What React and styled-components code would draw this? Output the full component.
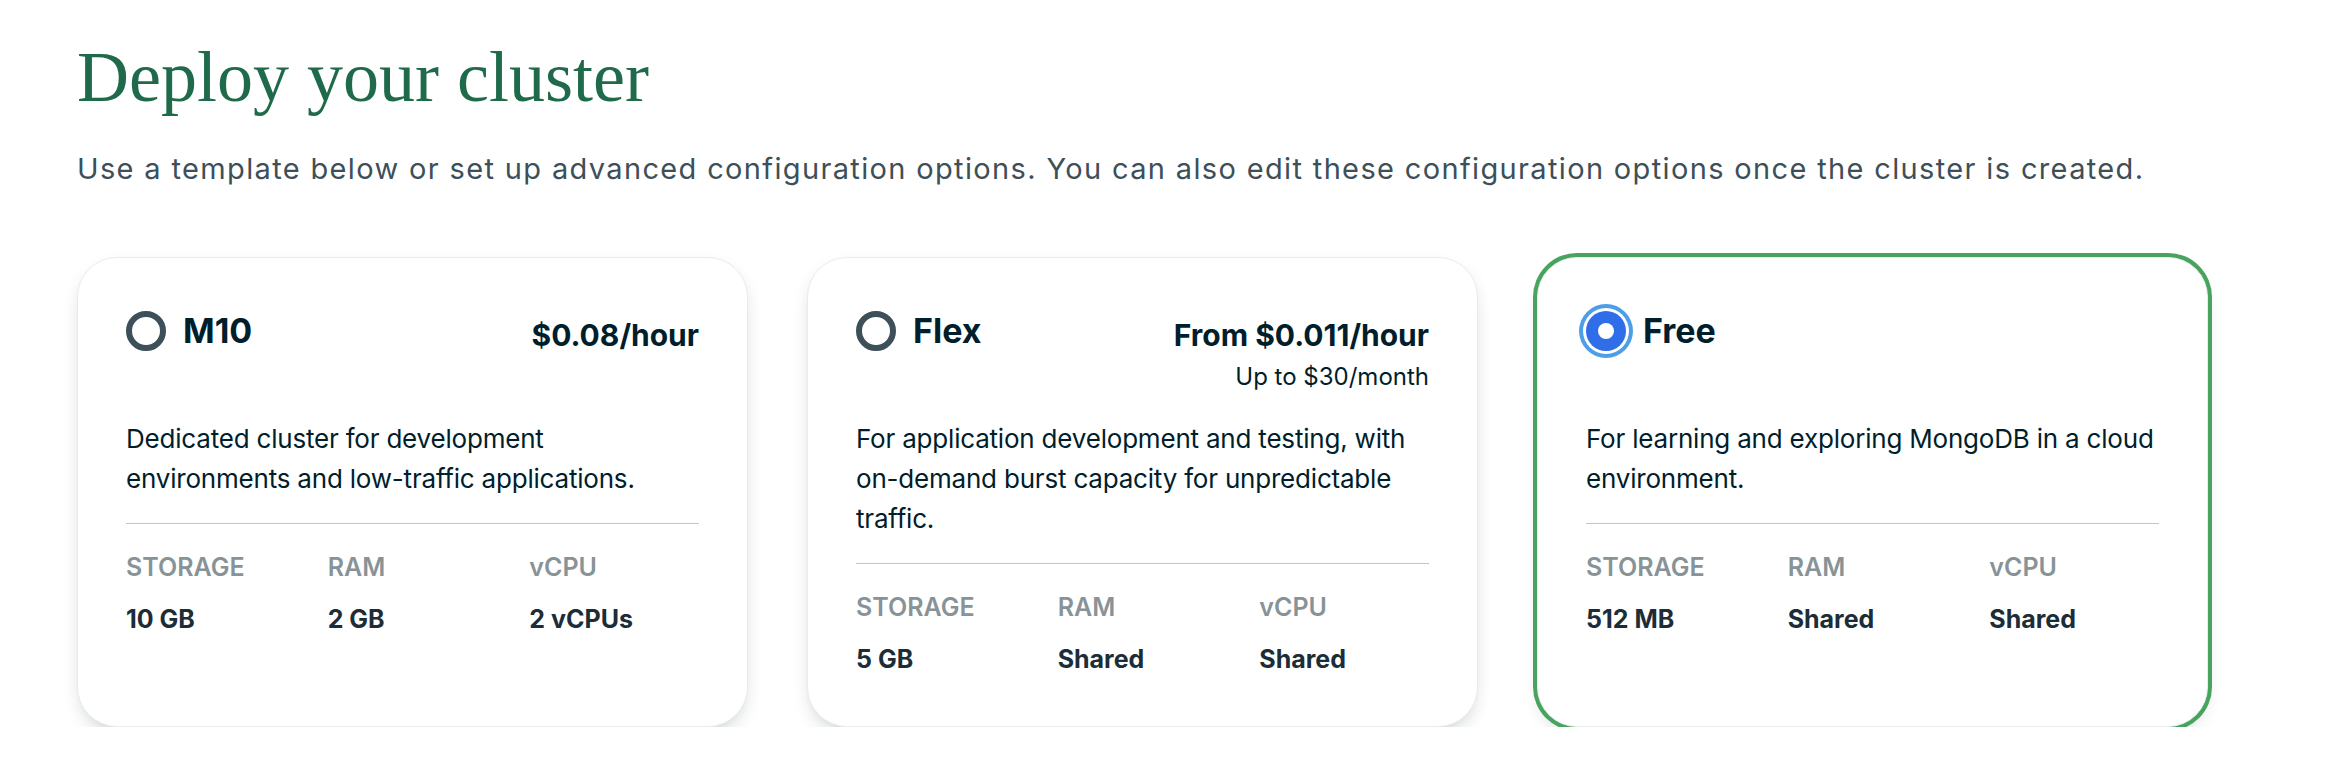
import styled, { createGlobalStyle } from "styled-components";

const GlobalStyle = createGlobalStyle`
    body {
        margin: 0;
        background: #ffffff;
        font-family: Inter, "Noto Sans", sans-serif;
        color: #001e2b;
    }
`

const Page = styled.main`
    padding: 37px 0 0 77px;
`

const Title = styled.h1`
    margin: 0;
    font-family: "Liberation Serif", serif;
    font-weight: 400;
    font-size: 72px;
    line-height: 80px;
    color: #1f6a4a;
`

const Subtitle = styled.p`
    margin: 32px 0 0;
    font-size: 29px;
    line-height: 40px;
    letter-spacing: 1.35px;
    color: #3d4f58;
`

const Cards = styled.div`
    display: flex;
    gap: 59px;
    margin-top: 68px;
    align-items: stretch;
`

const Card = styled.div`
    box-sizing: border-box;
    width: 671px;
    padding: 48px 48px 47px;
    border: 1px solid #e8edeb;
    border-radius: 40px;
    background: #ffffff;
    box-shadow: ${props => props.selected
        ? "0 0 0 4px #48a35f, 0 8px 20px -8px rgba(0, 30, 43, 0.3)"
        : "0 8px 20px -8px rgba(0, 30, 43, 0.3)"};
`

const Header = styled.div`
    display: flex;
    justify-content: space-between;
    align-items: flex-start;
    min-height: 96px;
`

const NameGroup = styled.div`
    display: flex;
    align-items: center;
    gap: 17px;
    height: 50px;
`

const Radio = styled.span`
    box-sizing: border-box;
    display: flex;
    align-items: center;
    justify-content: center;
    width: 40px;
    height: 40px;
    border-radius: 50%;
    border: ${props => props.checked ? "none" : "6px solid #3d4f58"};
    background: ${props => props.checked ? "#2f6ee8" : "transparent"};
    box-shadow: ${props => props.checked ? "0 0 0 3px #ffffff, 0 0 0 7px #4c9ee8" : "none"};

    &::after {
        content: "";
        display: ${props => props.checked ? "block" : "none"};
        width: 16px;
        height: 16px;
        border-radius: 50%;
        background: #ffffff;
    }
`

const Name = styled.span`
    font-size: 34px;
    font-weight: 700;
    line-height: 50px;
    color: #001e2b;
`

const PriceBox = styled.div`
    display: flex;
    flex-direction: column;
    align-items: flex-end;
    margin-top: 9px;
`

const Price = styled.span`
    font-size: 30px;
    font-weight: 700;
    line-height: 40px;
    color: #001e2b;
`

const PriceNote = styled.span`
    font-size: 24px;
    line-height: 44px;
    color: #001e2b;
`

const Description = styled.p`
    margin: 17px 0 0;
    font-size: 26px;
    line-height: 40px;
    letter-spacing: -0.2px;
    color: #001e2b;
`

const Divider = styled.hr`
    margin: 24px 0 23px;
    border: none;
    border-top: 1px solid #c1c7c6;
`

const Specs = styled.div`
    display: grid;
    grid-template-columns: repeat(3, 1fr);
    column-gap: 32px;
    row-gap: 12px;
`

const SpecLabel = styled.span`
    font-size: 25px;
    font-weight: 600;
    line-height: 40px;
    color: #889397;
`

const SpecValue = styled.span`
    font-size: 25px;
    font-weight: 700;
    line-height: 40px;
    color: #1c2d38;
`

const tiers = [
    {
        name: "M10",
        price: "$0.08/hour",
        description: "Dedicated cluster for development environments and low-traffic applications.",
        specs: ["10 GB", "2 GB", "2 vCPUs"],
    },
    {
        name: "Flex",
        price: "From $0.011/hour",
        note: "Up to $30/month",
        description: "For application development and testing, with on-demand burst capacity for unpredictable traffic.",
        specs: ["5 GB", "Shared", "Shared"],
    },
    {
        name: "Free",
        description: "For learning and exploring MongoDB in a cloud environment.",
        specs: ["512 MB", "Shared", "Shared"],
        selected: true,
    },
]

const labels = ["STORAGE", "RAM", "vCPU"]

export default function App() {
    return (
        <Page>
            <GlobalStyle/>
            <Title>Deploy your cluster</Title>
            <Subtitle>
                Use a template below or set up advanced configuration options. You can also edit these configuration options once the cluster is created.
            </Subtitle>
            <Cards>
                {tiers.map(tier => (
                    <Card key={tier.name} selected={tier.selected}>
                        <Header>
                            <NameGroup>
                                <Radio checked={tier.selected}/>
                                <Name>{tier.name}</Name>
                            </NameGroup>
                            {tier.price && (
                                <PriceBox>
                                    <Price>{tier.price}</Price>
                                    {tier.note && <PriceNote>{tier.note}</PriceNote>}
                                </PriceBox>
                            )}
                        </Header>
                        <Description>{tier.description}</Description>
                        <Divider/>
                        <Specs>
                            {labels.map(label => <SpecLabel key={label}>{label}</SpecLabel>)}
                            {tier.specs.map((value, i) => <SpecValue key={i}>{value}</SpecValue>)}
                        </Specs>
                    </Card>
                ))}
            </Cards>
        </Page>
    )
}
